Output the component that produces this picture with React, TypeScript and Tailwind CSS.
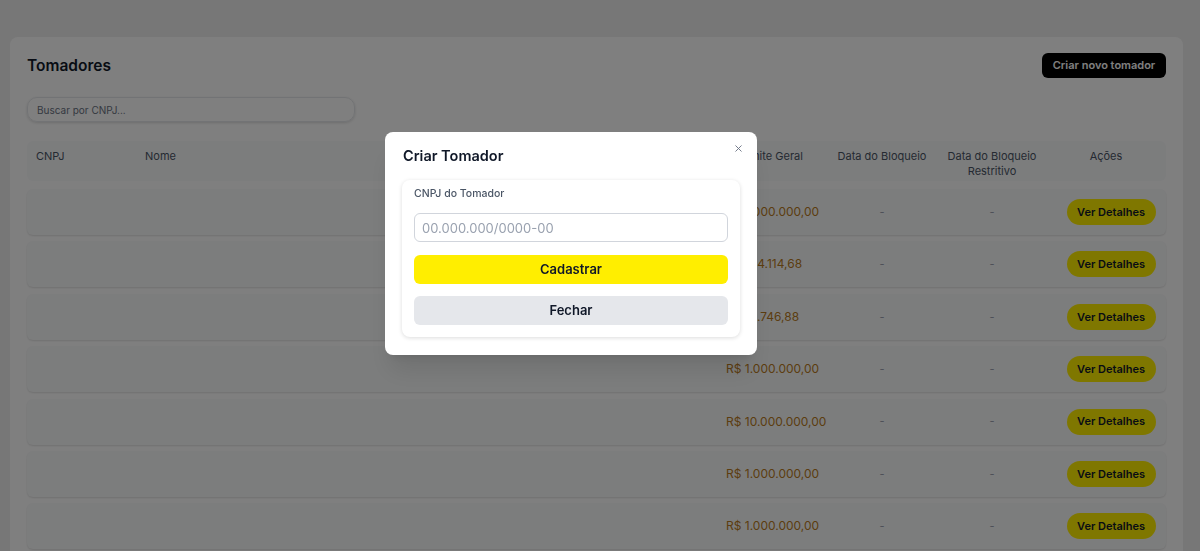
import { X } from "lucide-react";

interface IRow {
  limite: string;
}

const rows: IRow[] = [
  { limite: "R$ 1.000.000,00" },
  { limite: "R$ 414.114,68" },
  { limite: "R$ 10.746,88" },
  { limite: "R$ 1.000.000,00" },
  { limite: "R$ 10.000.000,00" },
  { limite: "R$ 1.000.000,00" },
  { limite: "R$ 1.000.000,00" },
];

const cols = "grid grid-cols-[109px_581px_110px_110px_110px_118px]";

const TomadorRow = ({ limite }: IRow) => {
  return (
    <div className={`${cols} h-[46px] items-center rounded-md bg-gray-50 shadow-[0_1px_2px_rgba(0,0,0,0.12)]`}>
      <div></div>
      <div></div>
      <div className="whitespace-nowrap pl-[9px] text-[12px] text-[#b87a22]">{limite}</div>
      <div className="text-center text-[11px] text-gray-400">-</div>
      <div className="text-center text-[11px] text-gray-400">-</div>
      <div className="flex justify-center pl-[10px]">
        <button className="h-[26px] w-[89px] rounded-full bg-[#ffee00] text-[11px] font-semibold text-gray-900">
          Ver Detalhes
        </button>
      </div>
    </div>
  );
};

const CriarTomadorModal = () => {
  return (
    <div className="fixed inset-0 flex items-start justify-center bg-black/50 pt-[132px] pr-[58px]">
      <div className="relative w-[372px] rounded-lg bg-white px-[17px] pt-[14px] pb-[18px] shadow-xl">
        <button className="absolute right-[13px] top-[11px] text-gray-500">
          <X size={11} strokeWidth={2} />
        </button>
        <h2 className="pl-[1px] text-[14.5px] font-semibold leading-[20px] text-gray-900">Criar Tomador</h2>

        <div className="mt-[14px] rounded-lg bg-white px-[12px] pt-[6px] pb-[12px] shadow-[0_1px_4px_rgba(0,0,0,0.14)]">
          <label className="block text-[10.5px] font-medium leading-[16px] text-gray-600">CNPJ do Tomador</label>

          <input
            className="mt-[11px] h-[29px] w-full rounded-md border border-gray-300 px-[7px] text-[13px] outline-none placeholder:text-gray-400"
            placeholder="00.000.000/0000-00"
          />

          <button className="mt-[13px] h-[29px] w-full rounded-md bg-[#ffee00] text-[13px] font-semibold text-gray-900">
            Cadastrar
          </button>

          <button className="mt-[12px] h-[29px] w-full rounded-md bg-gray-200 text-[13px] font-semibold text-gray-900">
            Fechar
          </button>
        </div>
      </div>
    </div>
  );
};

export default function App() {
  return (
    <div className="h-[551px] overflow-hidden bg-[#eeeeee] pt-[37px] pl-[10px] pr-[17px] font-['Inter',sans-serif]">
      <div className="rounded-lg bg-white px-[17px] pt-[16px] pb-[20px]">
        <div className="flex items-center justify-between">
          <h1 className="text-[15.5px] font-semibold text-gray-900">Tomadores</h1>
          <button className="h-[25px] w-[124px] rounded-md bg-black text-[11px] font-semibold text-white">
            Criar novo tomador
          </button>
        </div>

        <input
          className="mt-[19px] h-[25px] w-[328px] rounded-[10px] border border-gray-200 px-[9px] text-[10px] shadow-[0_1px_3px_rgba(0,0,0,0.15)] outline-none placeholder:text-gray-500"
          placeholder="Buscar por CNPJ..."
        />

        <div className={`${cols} mt-[19px] h-[40px] items-start rounded-md bg-gray-50 pt-[8px] text-[11px] leading-[15px] text-gray-600`}>
          <div className="pl-[9px]">CNPJ</div>
          <div className="pl-[9px]">Nome</div>
          <div className="text-center">Limite Geral</div>
          <div className="text-center">Data do Bloqueio</div>
          <div className="text-center">Data do Bloqueio Restritivo</div>
          <div className="text-center">Ações</div>
        </div>

        <div className="mt-[8px] flex flex-col gap-[6.4px]">
          {rows.map((row, i) => (
            <TomadorRow key={i} limite={row.limite} />
          ))}
        </div>
      </div>

      <CriarTomadorModal />
    </div>
  );
}
